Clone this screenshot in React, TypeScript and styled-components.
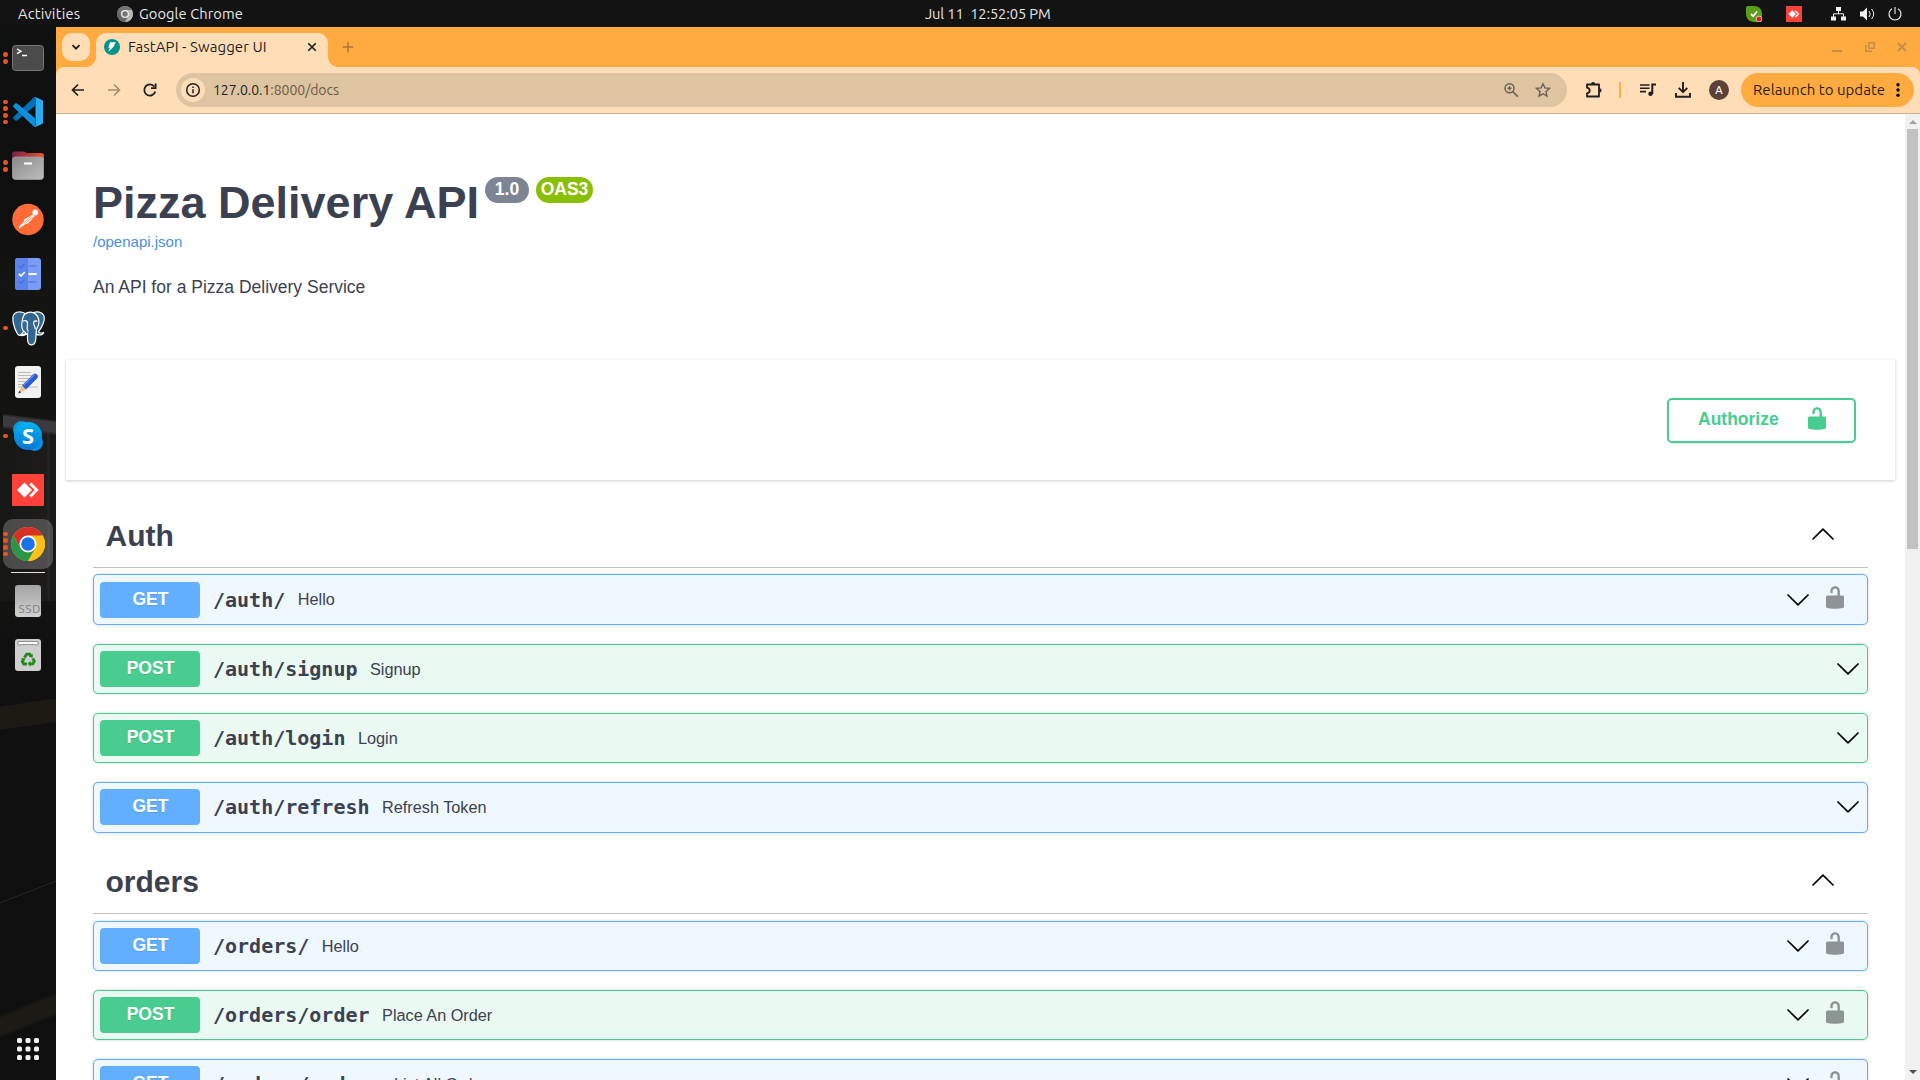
import React from 'react';
import styled, { createGlobalStyle } from 'styled-components';

const ui = `Ubuntu, "Noto Sans", sans-serif`;
const body = `"Liberation Sans", Arial, sans-serif`;

const Global = createGlobalStyle`
  *, *::before, *::after { box-sizing: border-box; }
  body { margin: 0; overflow: hidden; background: #111; }
  svg { display: block; flex: none; }
`;

const Desktop = styled.div`
  width: 1920px; height: 1080px; overflow: hidden;
  display: grid; grid-template: 27px 1053px / 56px 1864px;
`;

/* top system bar */
const TopBar = styled.header`
  grid-column: 1 / 3; display: grid; grid-template-columns: 925px 1fr auto; align-items: center;
  background: #131313; color: #e6e6e6; font: 400 14.67px/27px ${ui}; white-space: pre;
`;
const TopLeft = styled.div`display: flex; align-items: center; padding-left: 18px;`;
const TopRight = styled.div`display: flex; align-items: center; justify-content: flex-end; padding-right: 18px;`;
const Label = styled.span<{ $w: number; $ls?: number }>`
  display: inline-block; flex: none; width: ${p => p.$w}px; letter-spacing: ${p => p.$ls ?? 0}px; white-space: pre;
  text-align: left;
`;
const Gap = styled.span<{ $w: number }>`flex: none; width: ${p => p.$w}px;`;

/* dock */
const Dock = styled.nav`
  display: flex; flex-direction: column; align-items: stretch; padding: 4px 0;
  background:
    linear-gradient(172deg, transparent 25%, #1d1a13 27% 70%, transparent 72%) 0 666px / 56px 44px no-repeat,
    linear-gradient(159deg, transparent 49%, #33312e 50%, transparent 51%) 0 845px / 56px 40px no-repeat,
    linear-gradient(158deg, transparent 42%, #1b1a15 46% 60%, transparent 64%) 0 940px / 56px 90px no-repeat,
    linear-gradient(187deg, transparent 32%, #3c393f 38% 58%, transparent 66%) 3px 378px / 53px 40px no-repeat,
    linear-gradient(90deg, #171715, #1d1c1a 84%, #2a2926 86%, #1b1a18 90%) 0 400px / 56px 174px no-repeat,
    linear-gradient(#0f1010, #0f0f0f 20%, #141412 24%, #131312 55%, #101010 60%, #0f0f0f);
`;
const DockItem = styled.div<{ $active?: boolean }>`
  position: relative; height: 54px; display: grid; place-items: center;
  &::before {
    content: ''; position: absolute; inset: 2px 3px; border-radius: 10px;
    background: ${p => (p.$active ? 'rgba(255,255,255,.22)' : 'none')};
  }
  > svg { position: relative; }
`;
const Dots = styled.span`
  position: absolute; left: 3px; top: 0; height: 54px; display: flex; flex-direction: column;
  justify-content: center; gap: 2.2px;
  i { width: 4.6px; height: 4.6px; border-radius: 50%; background: #e95420; }
`;
const DockLine = styled.div`height: 1px; margin: 1px 11px; background: #dedede;`;
const DockSpacer = styled.div`flex: 1;`;

/* browser window */
const Browser = styled.main`
  display: flex; flex-direction: column; min-width: 0; background: #ffab40;
`;
const TabStrip = styled.div`
  height: 40px; display: flex; align-items: flex-end; padding: 0 13px 0 6px; color: #1f1f1f; font: 400 15px/20px ${ui};
`;
const TabSearch = styled.div`
  width: 28px; height: 28px; margin-bottom: 6px; border-radius: 10px; background: #ffdeb7; display: grid; place-items: center;
`;
const Tab = styled.div`
  position: relative; width: 232px; height: 34px; margin-left: 6px; padding: 0 11px 6px 8px; border-radius: 10px 10px 0 0;
  background: #ffdeb7; display: flex; align-items: center;
  &::before, &::after { content: ''; position: absolute; bottom: 0; width: 10px; height: 10px; }
  &::before { left: -10px; background: radial-gradient(circle at 0 0, transparent 9.6px, #ffdeb7 10.2px); }
  &::after { right: -10px; background: radial-gradient(circle at 100% 0, transparent 9.6px, #ffdeb7 10.2px); }
`;
const NewTab = styled.div`margin: 0 0 14px 14px;`;
const WindowControls = styled.div`margin: 0 0 15px auto; display: flex; align-items: center; gap: 22.5px;`;

const Toolbar = styled.div`
  height: 47px; display: flex; align-items: center; padding: 0 6px 1px 14px;
  background: #ffdeb7; border-bottom: 1px solid #c9b393; border-radius: 8px 8px 0 0; color: #1f1f1f; font: 400 14px/20px ${ui};
`;
const AddressBar = styled.div`
  width: 1391px; height: 34px; margin-left: 18px; padding: 0 16px 0 5px; border-radius: 17px; background: #dec4a1;
  display: flex; align-items: center;
  em { font-style: normal; color: #6a5a48; }
`;
const InfoChip = styled.span`
  width: 24px; height: 24px; margin-right: 8px; border-radius: 50%; background: #ffdeb7; display: grid; place-items: center;
`;
const Push = styled.span`flex: 1;`;
const Divider = styled.span`width: 2px; height: 16px; background: #ffab40; border-radius: 1px;`;
const Avatar = styled.span`
  width: 20px; height: 20px; border-radius: 50%; background: #5d4037; color: #fff; text-align: center; font: 500 11px/20px ${ui};
`;
const Relaunch = styled.button`
  width: 173px; height: 34px; margin: 0 0 0 12px; padding: 0 14px 0 12px; border: 0; border-radius: 17px; background: #ffab40;
  color: #1f1f1f; display: flex; align-items: center; font: 400 15px/20px ${ui}; justify-content: space-between;
`;

const Viewport = styled.div`flex: 1; min-height: 0; display: flex; background: #fff;`;
const Page = styled.div`flex: 1; overflow: hidden; font-family: ${body}; color: #3b4151; background: #fff;`;
const Scrollbar = styled.div`
  width: 15px; background: #f1f1f1; display: flex; flex-direction: column; align-items: center; justify-content: space-between;
  padding: 0 2px;
`;
const ScrollTop = styled.div`
  width: 100%; display: flex; flex-direction: column; align-items: center;
  i { width: 11px; height: 420px; background: #c1c1c1; margin-top: 5px; }
`;
const Arrow = styled.span<{ $down?: boolean }>`
  border: 4px solid transparent; border-top-width: ${p => (p.$down ? 4 : 0)}px; border-bottom-width: ${p => (p.$down ? 0 : 4)}px;
  border-${p => (p.$down ? 'top' : 'bottom')}-color: ${p => (p.$down ? '#505050' : '#a3a3a3')};
  margin: ${p => (p.$down ? '0 0 6px' : '6px 0 0')};
`;

/* swagger document */
const Info = styled.section`height: 246px; padding: 62px 0 0 37px;`;
const TitleRow = styled.div`display: flex; align-items: flex-start;`;
const Title = styled.h2`margin: 0; font-size: 45px; line-height: 54px; font-weight: 700; white-space: nowrap;`;
const Badge = styled.span<{ $w: number; $bg: string }>`
  width: ${p => p.$w}px; height: 26px; border-radius: 13px; background: ${p => p.$bg}; color: #fff;
  margin: 1px 1px 0 6px; text-align: center; font-weight: 700; font-size: 17.5px; line-height: 24px;
`;
const SpecLink = styled.a`display: block; margin-top: 2px; color: #4990e2; font-size: 15px; line-height: 20px;`;
const Blurb = styled.p`margin: 22px 0 0; font-size: 17.5px; line-height: 26px;`;

const Scheme = styled.section`
  height: 120px; margin: 0 10px 28px; padding: 0 39px; display: flex; align-items: center; justify-content: flex-end;
  box-shadow: 0 1px 3px rgba(0,0,0,.2); background: #fff;
`;
const Authorize = styled.button`
  width: 189px; height: 45px; padding: 0 28.5px 3px 29px; border: 2px solid #49cc90; border-radius: 5px; background: #fff;
  box-shadow: 0 1px 2px rgba(0,0,0,.1); display: flex; align-items: center; justify-content: space-between;
  color: #49cc90; font: 700 17.5px/20px ${body};
`;

const Tag = styled.section`margin: 0 37px; padding-bottom: 3px;`;
const TagHead = styled.h3`
  margin: 0 0 6.4px; height: 60px; padding: 0 34px 4px 12.5px; display: flex; align-items: center; justify-content: space-between;
  border-bottom: 1px solid #bfc1c5; font-size: 30px; line-height: 36px; font-weight: 700;
  svg { margin-bottom: 3px; }
`;
type Method = 'GET' | 'POST';
const tone = { GET: '#61affe', POST: '#49cc90' };
const fill = { GET: '#eff7ff', POST: '#eaf9f2' };
const Operation = styled.div<{ $m: Method }>`
  height: 50.6px; margin-bottom: 18.6px; padding: 0 8px 0 6px; display: flex; align-items: center;
  border: 1px solid ${p => tone[p.$m]}; border-radius: 5px; background: ${p => fill[p.$m]}; box-shadow: 0 0 3px rgba(0,0,0,.19);
`;
const Verb = styled.span<{ $m: Method }>`
  width: 100px; height: 36px; border-radius: 4px; background: ${p => tone[p.$m]}; color: #fff; text-align: center;
  font-size: 17.5px; line-height: 35.2px; font-weight: 700; text-shadow: 0 1px 0 rgba(0,0,0,.1); text-indent: 1px;
`;
const Path = styled.span`
  margin: 0 12.5px 0 13px; font: 600 20px/24px "DejaVu Sans Mono", monospace; white-space: pre;
`;
const Summary = styled.span`flex: 1; margin-bottom: .6px; font-size: 16.25px; line-height: 20px; white-space: nowrap;`;
const LockBox = styled.span`margin: 0 15px 4.4px 17px;`;

const Chevron = ({ up }: { up?: boolean }) => (
  <svg width="22" height="12" viewBox="0 0 22 12" fill="none" stroke="#000" strokeWidth="1.7" strokeLinecap="round" strokeLinejoin="round">
    <path d={up ? 'M1 11 11 1.2 21 11' : 'M1 1 11 10.8 21 1'} />
  </svg>
);
const Lock = ({ color }: { color: string }) => (
  <svg width="18" height="23" viewBox="0 0 18 23" fill={color}>
    <path d="M4.3 6.3V5.6C4.3 2.4 6.2.3 9.1.3s4.8 2.1 4.8 5.3V9.6H16.4c1 0 1.6.6 1.6 1.7v8.9c0 1-.5 1.6-1.4 1.9-1.8.6-4.2.7-7.6.7s-5.8-.1-7.6-.7C.5 21.8 0 21.2 0 20.2v-8.9C0 10.2.6 9.6 1.6 9.6H11.5V5.6c0-1.9-.9-3.1-2.4-3.1S6.7 3.7 6.7 5.6v.7c0 .6-.5 1-1.2 1s-1.2-.4-1.2-1Z" />
  </svg>
);
const Stroke = ({ d, s = 16, w = 1.7, c = '#1f1f1f', children }: { d?: string; s?: number; w?: number; c?: string; children?: React.ReactNode }) => (
  <svg width={s} height={s} viewBox="0 0 16 16" fill="none" stroke={c} strokeWidth={w}>{d && <path d={d} />}{children}</svg>
);

const AnyDesk = ({ s }: { s: number }) => (
  <svg width={s} height={s} viewBox="0 0 32 32">
    <rect width="32" height="32" rx="1" fill="#ff4238" />
    <path d="m5 16 7.5-7.5L20 16l-7.5 7.5Z" fill="#fff" />
    <path d="m18.3 9.5 6.5 6.5-6.5 6.5" fill="none" stroke="#fff" strokeWidth="2.8" />
  </svg>
);
const Terminal = () => (
  <svg width="32" height="26" viewBox="0 0 32 26">
    <rect x=".5" y=".5" width="31" height="25" rx="3" fill="#4b4b4b" stroke="#777" />
    <path d="m5 4 4 2.3L5 8.6M10 10.5h5" fill="none" stroke="#fff" strokeWidth="1.4" />
  </svg>
);
const Code = () => (
  <svg width="30" height="30" viewBox="0 0 30 30">
    <path d="M22 0v9L4 23.5c-.6.4-1.2.4-1.7 0L.4 21.7c-.5-.5-.5-1.2 0-1.7L20.5.8C21 .4 21.5 0 22 0Z" fill="#0071b8" />
    <path d="M22 30v-9L4 6.5c-.6-.4-1.2-.4-1.7 0L.4 8.3c-.5.5-.5 1.2 0 1.7l20.1 19.2c.5.5 1 .8 1.5.8Z" fill="#0e91dc" />
    <path d="M21.5.3c.6-.4 1-.3 1.5-.1l6 2.9c.6.3 1 .9 1 1.5v20.8c0 .6-.4 1.2-1 1.5l-6 2.9c-.5.2-1 .2-1.5-.2.5.2 1-.2 1-1V1.4c0-.8-.5-1.3-1-1.1Z" fill="#2aabf2" />
  </svg>
);
const Files = () => (
  <svg width="32" height="30" viewBox="0 0 32 30">
    <defs>
      <linearGradient id="fb"><stop stopColor="#77214b" /><stop offset="1" stopColor="#e8562a" /></linearGradient>
      <linearGradient id="ff" x2="1" y2="1"><stop stopColor="#8a8a8a" /><stop offset="1" stopColor="#bdbdbd" /></linearGradient>
    </defs>
    <path d="M0 9V3Q0 .5 2.5.5H12L15 2H29.5Q32 2 32 4.5V9Z" fill="url(#fb)" />
    <rect x=".5" y="6" width="31" height="22.5" rx="3" fill="url(#ff)" stroke="#aaa" strokeWidth=".7" />
    <path d="M12 12.500h8" stroke="#fff" strokeWidth="2" />
  </svg>
);
const Postman = () => (
  <svg width="32" height="34" viewBox="0 0 33 34">
    <circle cx="16.5" cy="16.5" r="16.2" fill="#ff6c37" />
    <circle cx="24" cy="9.2" r="2.9" fill="#fff" />
    <path d="m22 11 1.5 2-7 7.5-2.5.5-7 5 .5-2.500 4.500-4.500.5-2.500Z" fill="#fff" />
    <path d="m12 20 8-7M13 21l8.500-7" stroke="#ff6c37" strokeWidth=".7" />
  </svg>
);
const Todo = () => (
  <svg width="26" height="32" viewBox="0 0 26 32" fill="none">
    <rect width="26" height="32" rx="3" fill="#7b9cf6" /><path d="M3 0h10v32H3q-3 0-3-3V3q0-3 3-3" fill="#5b83ee" />
    <path d="m4 8 2 2 3.500-4M13.500 8H21.500M4 23.500l2 2 3.500-4M13.500 24H21.500" stroke="#4a70cc" strokeWidth="1.2" />
    <path d="m4 16 2 2 3.800-4M13.500 16H21.500" stroke="#fff" strokeWidth="1.8" />
  </svg>
);
const Postgres = () => (
  <svg width="33" height="35" viewBox="0 0 33 35" fill="#336791" stroke="#fff" strokeWidth="1.2" strokeLinejoin="round" strokeLinecap="round">
    <path d="M21 2c4-2 9-1 10.500 2 2 4-1 11-4.500 16-.7 1 0 2 1.500 2 1 0 2 0 3-.6.5.6-1.500 2.600-4 2.600-2 0-3-.5-3.500-1Z" />
    <path d="M13 2.500C9 .2 3.500.3 1.600 4-.3 8 2 17 5 22c1.600 3 3.300 3 5 .7l3-3.700Z" />
    <path d="M10.500 18.500C9 14 10 9 11.500 5c1.500-3.500 8-5.500 12-2 4 3 4.500 10 1.500 14-.8 1.500-1 5-1 8 0 4-.5 8.500-4 8.800-3.500.4-4.500-2.500-4.500-6.500V22c-1 2-5 3-7 2.300 1.500-.5 4.500-.8 5-2 .6-1.300-2-1-3-3.800Z" />
    <path d="M11.500 10c2-1 4-.5 4 2 .2 3-1.500 5 .5 8m9-10c-2-.6-3.500 0-3.300 2.300.2 2.700 1.800 4 1.500 5.500" fill="none" />
    <path d="M14 10.800h.3M23.800 10.500h.2" />
  </svg>
);
const TextEditor = () => (
  <svg width="26" height="32" viewBox="0 0 26 32">
    <rect width="26" height="32" rx="3" fill="#f2f2f2" />
    <path d="M3 6.500h13M3 9.500h20M3 12.500h12M3 15.500h8M3 18.500h7M3 21h20" stroke="#b9b5a6" strokeWidth=".9" />
    <path d="m7 19.500 4 4-7.500 3.800Z" fill="#f5bd84" /><path d="m4.500 24.800-1.300 2.800 2.900-1.200Z" fill="#333" />
    <path d="m7 19.500 11.500-11.500q1.500-1.300 3 .2l.9.9q1.300 1.400 0 2.800L11 23.500Z" fill="#2a5bd0" />
    <path d="m8.500 19.500 11-11" stroke="#5f8bf0" strokeWidth="1.3" />
  </svg>
);
const SkypeText = styled.text`font: 700 22px "Open Sans", sans-serif;`;
const SsdText = styled.text`font: 11.5px "Noto Sans", sans-serif;`;
const Skype = () => (
  <svg width="30" height="30" viewBox="0 0 30 30">
    <defs><linearGradient id="sk" x2="0" y2="1"><stop stopColor="#00b3f2" /><stop offset="1" stopColor="#0877d6" /></linearGradient></defs>
    <circle cx="8.5" cy="8.5" r="8.5" fill="#079bdf" /><circle cx="21.5" cy="21.5" r="8.5" fill="#118fe0" />
    <circle cx="15" cy="15" r="14" fill="url(#sk)" />
    <SkypeText x="15" y="23" textAnchor="middle" fill="#fff">S</SkypeText>
  </svg>
);
const Chrome = ({ s, mono }: { s: number; mono?: boolean }) => (
  <svg width={s} height={s} viewBox="0 0 34 34">
    <circle cx="17" cy="17" r="17" fill={mono ? '#8a8a8a' : '#fbc116'} />
    <path d="M17 17 31.7 8.5A17 17 0 0 0 2.3 8.5L9.6 21.2Z" fill={mono ? '#737373' : '#d93025'} />
    <path d="M2.3 8.5A17 17 0 0 0 17 34l7.400-12.800L17 17l-7.400 4.200Z" fill={mono ? '#666' : '#2b9549'} />
    <path d="M17 8.500h14.700A17 17 0 0 1 17 34l7.400-12.800Z" fill={mono ? '#b9b9b9' : '#fbc116'} />
    <circle cx="17" cy="17" r="8.5" fill={mono ? '#ededed' : '#fff'} />
    <circle cx="17" cy="17" r={mono ? 5.8 : 6.8} fill={mono ? '#777' : '#1a73e8'} />
  </svg>
);
const Ssd = () => (
  <svg width="26" height="32" viewBox="0 0 26 32">
    <defs><linearGradient id="sd" x2="0" y2="1"><stop stopColor="#a5a5a5" /><stop offset="1" stopColor="#d0d0d0" /></linearGradient></defs>
    <rect width="26" height="32" rx="3" fill="url(#sd)" />
    <SsdText x="3.5" y="28" fill="#858585" textLength="22">SSD</SsdText>
  </svg>
);
const Trash = () => (
  <svg width="26" height="32" viewBox="0 0 26 32">
    <rect width="26" height="32" rx="3" fill="#cfcfcf" />
    <path d="M3 2.500h20v3.500q-10-1.500-20 0Z" fill="#fff" stroke="#777" strokeWidth=".8" />
    <g fill="none" stroke="#26891e" strokeWidth="2.9">
      <path d="m9.300 18.500 2.400-3.400h3l1.400 2.200" /><path d="m17.800 19.300 1.500 3-1.500 2.600h-3" /><path d="M12 25H8.800l-1.500-2.500 1.200-2" />
    </g>
    <path d="m17.800 14.800-.3 4.200-3.700-1.600ZM15.600 21.800v6l-3-3ZM6 19l4.500.2-1.800 4Z" fill="#26891e" />
  </svg>
);
const AppGrid = () => (
  <svg width="22" height="22" viewBox="0 0 22 22" fill="#f2f2f2">
    {[0, 8.5, 17].map(y => [0, 8.5, 17].map(x => <rect key={`${x}-${y}`} x={x} y={y} width="5" height="5" rx="1.5" />))}
  </svg>
);

const dock: { icon: React.ReactNode; dots?: number; active?: boolean }[] = [
  { icon: <Terminal />, dots: 2 }, { icon: <Code />, dots: 4 }, { icon: <Files />, dots: 2 }, { icon: <Postman /> },
  { icon: <Todo /> }, { icon: <Postgres />, dots: 1 }, { icon: <TextEditor /> }, { icon: <Skype />, dots: 1 },
  { icon: <AnyDesk s={32} /> }, { icon: <Chrome s={34} />, dots: 4, active: true },
];

type Op = { m: Method; path: string; text: string; lock?: boolean };
const tags: { name: string; ops: Op[] }[] = [
  {
    name: 'Auth', ops: [
      { m: 'GET', path: '/auth/', text: 'Hello', lock: true },
      { m: 'POST', path: '/auth/signup', text: 'Signup' },
      { m: 'POST', path: '/auth/login', text: 'Login' },
      { m: 'GET', path: '/auth/refresh', text: 'Refresh Token' },
    ],
  },
  {
    name: 'orders', ops: [
      { m: 'GET', path: '/orders/', text: 'Hello', lock: true },
      { m: 'POST', path: '/orders/order', text: 'Place An Order', lock: true },
      { m: 'GET', path: '/orders/orders', text: 'List All Orders', lock: true },
    ],
  },
];

export default function App() {
  return (
    <Desktop>
      <Global />
      <TopBar>
        <TopLeft>
          <Label $w={99} $ls={0.22}>Activities</Label>
          <Chrome s={16} mono />
          <Gap $w={6} />
          <Label $w={110} $ls={0.08}>Google Chrome</Label>
        </TopLeft>
        <Label $w={130} $ls={-0.11}>Jul 11  12:52:05 PM</Label>
        <TopRight>
          <svg width="16" height="16" viewBox="0 0 16 16">
            <path d="M0 1.500Q0 0 2 0h6q7 0 8 7v7q0 2-2 2H8Q0 15 0 8Z" fill="#5a9e1b" />
            <path d="m5 8 2.200 2.200L11 5.500" fill="none" stroke="#fff" strokeWidth="1.8" />
            <circle cx="13" cy="13" r="2.9" fill="#e01b24" stroke="#eee" strokeWidth=".7" />
          </svg>
          <Gap $w={24} />
          <AnyDesk s={16} />
          <Gap $w={29} />
          <svg width="15" height="14" viewBox="0 0 15 14" fill="#f2f2f2">
            <path d="M5 0h5v4H5ZM0 9.500h5V13.500H0ZM10 9.500h5V13.500h-5Z" />
            <path d="M7.500 4v3M2.500 10V6.800h10V10" fill="none" stroke="#f2f2f2" />
          </svg>
          <Gap $w={14} />
          <svg width="15" height="14" viewBox="0 0 15 14" fill="none" stroke="#f2f2f2">
            <path d="M0 4.500h3L7 .5v13L3 9.500H0Z" fill="#f2f2f2" stroke="none" />
            <path d="M9 4q2.500 3 0 6M11.500 2q4.500 5 0 10" />
          </svg>
          <Gap $w={13} />
          <svg width="14" height="14" viewBox="0 0 14 14" fill="none" stroke="#f2f2f2" strokeWidth="1.1">
            <path d="M7 0v7M4 1.800a6 6 0 1 0 6 0" />
          </svg>
        </TopRight>
      </TopBar>

      <Dock>
        {dock.map((d, i) => (
          <DockItem key={i} $active={d.active}>
            {d.icon}
            {d.dots && <Dots>{Array.from({ length: d.dots }, (_, k) => <i key={k} />)}</Dots>}
          </DockItem>
        ))}
        <DockLine />
        <DockItem><Ssd /></DockItem>
        <DockItem><Trash /></DockItem>
        <DockSpacer />
        <DockItem><AppGrid /></DockItem>
      </Dock>

      <Browser>
        <TabStrip>
          <TabSearch><Stroke d="m4.500 6.200 3.500 3.500 3.500-3.500" w={1.8} /></TabSearch>
          <Tab>
            <svg width="16" height="16" viewBox="0 0 16 16">
              <circle cx="8" cy="8" r="8" fill="#059487" /><path d="M6 3.300h6L9.800 6.300H11l-6.500 6.500 1.300-4H4.300Z" fill="#fff" />
            </svg>
            <Gap $w={8} />
            <Label $w={150} $ls={0.08}>FastAPI - Swagger UI</Label>
            <Push />
            <Stroke s={10} w={2.7} d="m2 2 12 12M14 2 2 14" />
          </Tab>
          <NewTab><Stroke s={12} w={2} c="#a7783b" d="M8 1v14M1 8h14" /></NewTab>
          <WindowControls>
            <svg width="10" height="10" viewBox="0 0 10 10"><path d="M0 9h10" stroke="#c08d4b" strokeWidth="2" /></svg>
            <svg width="10" height="10" viewBox="0 0 10 10" fill="none" stroke="#c08d4b" strokeWidth="1.5">
              <path d="M3.700.8h5.500v5.500H3.700ZM.8 3v6.200H7" />
            </svg>
            <svg width="10" height="10" viewBox="0 0 10 10"><path d="m1 1 8 8M9 1 1 9" stroke="#c08d4b" strokeWidth="1.9" /></svg>
          </WindowControls>
        </TabStrip>

        <Toolbar>
          <Stroke d="M14 8H2.500M8 2.500 2.500 8 8 13.500" />
          <Gap $w={20} />
          <Stroke d="M2 8h11.500M8 2.500 13.500 8 8 13.500" c="#a48e75" />
          <Gap $w={20} />
          <Stroke w={1.8} d="M13.300 9.500A5.600 5.600 0 1 1 12.300 4.500M13.600 1.500v4.700H9" />
          <AddressBar>
            <InfoChip>
              <Stroke w={1.5}><circle cx="8" cy="8" r="6.3" /><path d="M8 7.200v4M8 4.500v1.500" /></Stroke>
            </InfoChip>
            <Label $w={140} $ls={-0.04}>127.0.0.1<em>:8000/docs</em></Label>
            <Push />
            <Stroke w={1.5} c="#6a6159"><circle cx="6.5" cy="6.2" r="4.5" /><path d="m9.800 9.600 5 5M6.500 4.200v4M4.500 6.200h4" /></Stroke>
            <Gap $w={16} />
            <Stroke w={1.4} c="#6a6159" d="m8 1.800 1.900 4.100 4.500.5L11 9.500l.9 4.500L8 11.700 4.100 14 5 9.500 1.600 6.400l4.500-.5Z" />
          </AddressBar>
          <Gap $w={18} />
          <svg width="18" height="18" viewBox="0 0 18 18" fill="none" stroke="#1f1f1f" strokeWidth="1.8" strokeLinejoin="round">
            <path d="M2 3.500H14v12H2v-3.200q2.700-.6 2.700-2.800T2 6.700Z" />
            <path d="M6 3a2.100 2.100 0 0 1 4.200 0ZM14.500 7.300a2.100 2.100 0 0 1 0 4.200Z" fill="#1f1f1f" stroke="none" />
          </svg>
          <Gap $w={16} />
          <Divider />
          <Gap $w={19} />
          <svg width="16" height="14" viewBox="0 0 16 14" fill="none" stroke="#1f1f1f" strokeWidth="1.6">
            <path d="M0 2h9.500M0 5.300h9.500M0 8.600h6" /><path d="M12.300 11V1.500H16" strokeWidth="2" /><circle cx="10.5" cy="10.8" r="2.2" fill="#1f1f1f" stroke="none" />
          </svg>
          <Gap $w={19} />
          <Stroke w={1.9} d="M8 0v9.800M3.700 5.800 8 10.100l4.300-4.300M1 11v3.800h14V11" />
          <Gap $w={18} />
          <Avatar>A</Avatar>
          <Relaunch>
            <Label $w={133} $ls={0.04}>Relaunch to update</Label>
            <svg width="4" height="14" viewBox="0 0 4 14"><circle cx="2" cy="1.8" r="1.7" /><circle cx="2" cy="7" r="1.7" /><circle cx="2" cy="12.3" r="1.7" /></svg>
          </Relaunch>
        </Toolbar>

        <Viewport>
          <Page>
            <Info>
              <TitleRow>
                <Title>Pizza Delivery API</Title>
                <Badge $w={44} $bg="#7d8492">1.0</Badge>
                <Badge $w={57} $bg="#89bf04">OAS3</Badge>
              </TitleRow>
              <SpecLink>/openapi.json</SpecLink>
              <Blurb>An API for a Pizza Delivery Service</Blurb>
            </Info>
            <Scheme>
              <Authorize>Authorize<Lock color="#49cc90" /></Authorize>
            </Scheme>
            {tags.map(t => (
              <Tag key={t.name}>
                <TagHead>{t.name}<Chevron up /></TagHead>
                {t.ops.map(o => (
                  <Operation key={o.path} $m={o.m}>
                    <Verb $m={o.m}>{o.m}</Verb>
                    <Path>{o.path}</Path>
                    <Summary>{o.text}</Summary>
                    <Chevron />
                    {o.lock && <LockBox><Lock color={o.m === 'GET' ? '#8f9398' : '#8c9591'} /></LockBox>}
                  </Operation>
                ))}
              </Tag>
            ))}
          </Page>
          <Scrollbar>
            <ScrollTop><Arrow /><i /></ScrollTop>
            <Arrow $down />
          </Scrollbar>
        </Viewport>
      </Browser>
    </Desktop>
  );
}
